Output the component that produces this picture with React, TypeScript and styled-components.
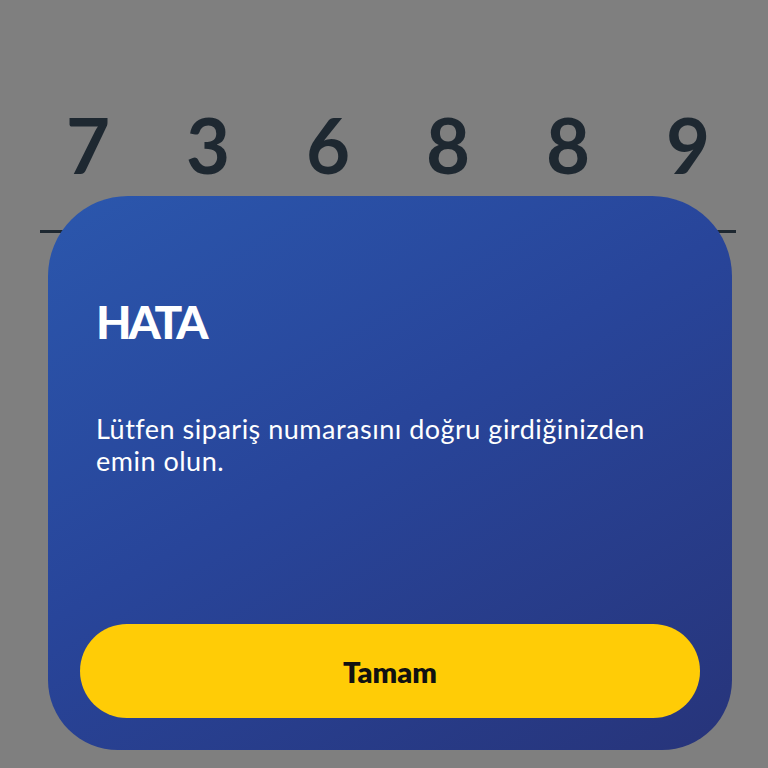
import React from 'react';
import styled, { createGlobalStyle } from 'styled-components';

const GlobalStyle = createGlobalStyle`
  html, body {
    margin: 0;
    padding: 0;
    background: #7f7f7f;
    font-family: Lato, "Open Sans", sans-serif;
  }
`;

const digits = ['7', '3', '6', '8', '8', '9'];

const App = () => {
  return (
    <>
      <GlobalStyle />
      <Page>
        <CodeRow>
          {digits.map((d, i) => (
            <DigitCell key={i}>
              <Digit>{d}</Digit>
              <Underline />
            </DigitCell>
          ))}
        </CodeRow>
      </Page>
      <Dialog role="alertdialog">
        <Title>HATA</Title>
        <Message>Lütfen sipariş numarasını doğru girdiğinizden emin olun.</Message>
        <OkButton>Tamam</OkButton>
      </Dialog>
    </>
  );
};

// Styled Components
const Page = styled.div`
  width: 768px;
  height: 768px;
  padding-top: 100px;
  box-sizing: border-box;
`;

const CodeRow = styled.div`
  display: flex;
  gap: 24px;
  padding: 0 32px 0 40px;
`;

const DigitCell = styled.div`
  width: 96px;
  display: flex;
  flex-direction: column;
  align-items: center;
`;

const Digit = styled.span`
  font-size: 76px;
  font-weight: 700;
  line-height: 90px;
  color: #1e2831;
`;

const Underline = styled.div`
  width: 100%;
  height: 3px;
  margin-top: 40px;
  background: #1e2831;
`;

const Dialog = styled.div`
  position: fixed;
  top: 196px;
  left: 48px;
  width: 684px;
  height: 554px;
  box-sizing: border-box;
  border-radius: 80px 80px 70px 70px;
  background: linear-gradient(150deg, #2b57ad 0%, #28459a 45%, #27347a 100%);
  padding: 98px 32px 32px;
  display: flex;
  flex-direction: column;
  color: #fff;
`;

const Title = styled.h2`
  margin: 0 0 0 16px;
  font-size: 46px;
  font-weight: 900;
  letter-spacing: -3px;
  line-height: 56px;
`;

const Message = styled.p`
  margin: 63px 0 0 16px;
  max-width: 580px;
  font-size: 27px;
  letter-spacing: 0.5px;
  line-height: 32px;
  font-weight: 400;
`;

const OkButton = styled.button`
  margin-top: auto;
  height: 94px;
  border: none;
  border-radius: 47px;
  background: #ffcc06;
  color: #111;
  font-family: Lato, sans-serif;
  font-size: 29px;
  font-weight: 800;
  cursor: pointer;
`;

export default App;
